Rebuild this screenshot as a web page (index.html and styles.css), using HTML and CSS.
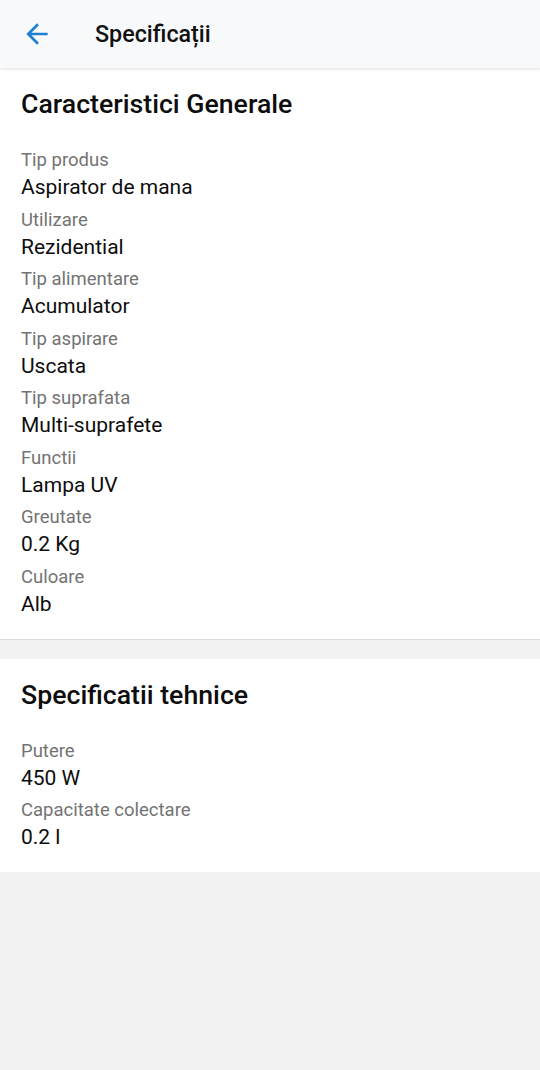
FILE: index.html
```html
<!DOCTYPE html>
<html lang="ro">
<head>
    <meta charset="UTF-8">
    <meta name="viewport" content="width=device-width, initial-scale=1.0">
    <title>Specificații</title>
    <link rel="stylesheet" href="styles.css">
</head>
<body>
    <header class="top-bar">
        <button class="back-button" aria-label="Inapoi">
            <svg viewBox="0 0 24 24" width="32" height="32">
                <path d="M20 11H7.83l5.59-5.59L12 4l-8 8 8 8 1.41-1.41L7.83 13H20v-2z" fill="#1f7fd3"/>
            </svg>
        </button>
        <h1 class="top-title">Specificații</h1>
    </header>

    <!-- Caracteristici generale -->
    <section class="spec-section">
        <h2>Caracteristici Generale</h2>
        <div class="spec-item">
            <div class="spec-label">Tip produs</div>
            <div class="spec-value">Aspirator de mana</div>
        </div>
        <div class="spec-item">
            <div class="spec-label">Utilizare</div>
            <div class="spec-value">Rezidential</div>
        </div>
        <div class="spec-item">
            <div class="spec-label">Tip alimentare</div>
            <div class="spec-value">Acumulator</div>
        </div>
        <div class="spec-item">
            <div class="spec-label">Tip aspirare</div>
            <div class="spec-value">Uscata</div>
        </div>
        <div class="spec-item">
            <div class="spec-label">Tip suprafata</div>
            <div class="spec-value">Multi-suprafete</div>
        </div>
        <div class="spec-item">
            <div class="spec-label">Functii</div>
            <div class="spec-value">Lampa UV</div>
        </div>
        <div class="spec-item">
            <div class="spec-label">Greutate</div>
            <div class="spec-value">0.2 Kg</div>
        </div>
        <div class="spec-item">
            <div class="spec-label">Culoare</div>
            <div class="spec-value">Alb</div>
        </div>
    </section>

    <!-- Specificatii tehnice -->
    <section class="spec-section">
        <h2>Specificatii tehnice</h2>
        <div class="spec-item">
            <div class="spec-label">Putere</div>
            <div class="spec-value">450 W</div>
        </div>
        <div class="spec-item">
            <div class="spec-label">Capacitate colectare</div>
            <div class="spec-value">0.2 l</div>
        </div>
    </section>
</body>
</html>
```

FILE: styles.css
```css
body {
    font-family: Roboto, 'Noto Sans', sans-serif;
    margin: 0;
    padding: 0;
    background-color: #f2f2f2;
    color: #111;
    height: 1070px;
    overflow: hidden;
}
.top-bar {
    height: 68px;
    display: flex;
    align-items: center;
    background-color: #f8f9fb;
    box-shadow: 0 1px 3px rgba(0, 0, 0, 0.14);
    position: relative;
    z-index: 1;
}
.back-button {
    border: none;
    background: none;
    padding: 0;
    margin-left: 21px;
    width: 32px;
    height: 32px;
    display: flex;
    cursor: pointer;
}
.top-title {
    margin: 0 0 0 42px;
    font-size: 23.3px;
    font-weight: 500;
    color: #111;
}
.spec-section {
    background-color: #fff;
    padding: 22px 21px 20px;
    border-bottom: 1px solid #dcdcdc;
    margin-bottom: 19px;
}
.spec-section:last-child {
    border-bottom: none;
}
.spec-section h2 {
    margin: 0 0 30px;
    font-size: 26.7px;
    line-height: 28px;
    font-weight: 500;
    color: #0d0d0d;
}
.spec-item {
    margin-bottom: 5.5px;
}
.spec-item:last-child {
    margin-bottom: 0;
}
.spec-label {
    font-size: 18.5px;
    line-height: 24px;
    color: #737373;
}
.spec-value {
    font-size: 21px;
    line-height: 30px;
    color: #0d0d0d;
}
```
